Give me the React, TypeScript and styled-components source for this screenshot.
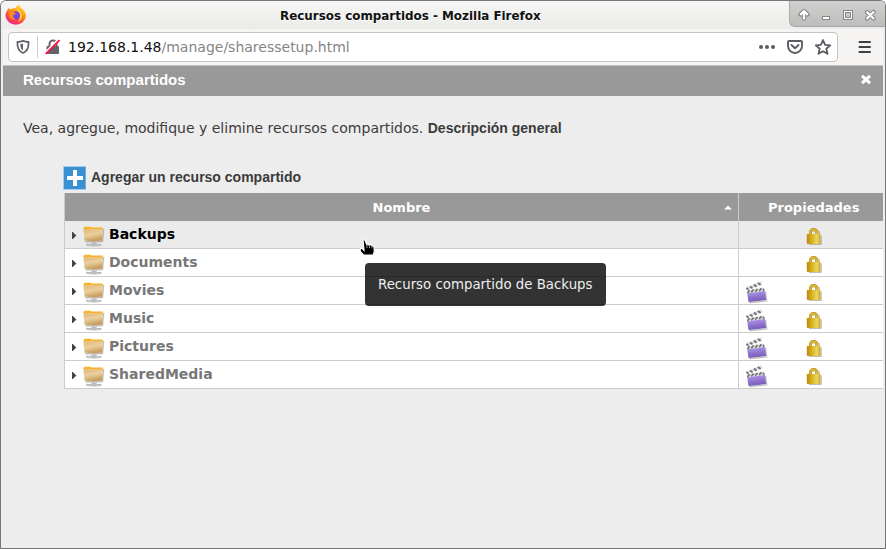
import React from 'react';
import styled, { createGlobalStyle } from 'styled-components';

const Global = createGlobalStyle`
  * { box-sizing: border-box; }
  body { margin: 0; background: #fff; overflow: hidden; }
  svg { display: block; flex: none; }
`;
const sans = '"DejaVu Sans", sans-serif';
const arial = '"Liberation Sans", Arial, sans-serif';

const Window = styled.div`
  width: 886px; height: 549px; position: relative; overflow: hidden;
  display: flex; flex-direction: column; background: #ededed;
  border: 1px solid #777; border-bottom-color: #747474; border-radius: 6px 6px 1px 1px;
  color: #3b3b3b; font: 14px ${sans}; white-space: nowrap;
`;
const TitleBar = styled.header`
  height: 28px; flex: none; display: grid; grid-template-columns: 278px 1fr 96px;
  background: linear-gradient(#f6f6f5, #ebebea);
`;
const Logo = styled.div`padding: 3px 0 0 4px;`;
const Title = styled.div`
  font: bold 11.92px/27px ${sans}; color: #111; padding: 2px 0 0 1px; text-shadow: 0 1px #fff; height: 28px;
`;
const Controls = styled.div`
  height: 26px; background: linear-gradient(#d0d0cf, #bdbdbc);
  border: solid #aaa; border-width: 0 0 1px 1px; border-bottom-left-radius: 6px;
`;
const Toolbar = styled.div`
  height: 36px; flex: none; margin: 0 2px; padding: 3px 12px 0 5px; background: #f6f4f2;
  display: flex; justify-content: space-between;
`;
const Address = styled.div`
  width: 830px; height: 30px; border: 1px solid #c9c3bd; border-radius: 4px; background: #fff;
  display: flex; align-items: center; padding: 0 5px 0 7px;
`;
const Separator = styled.i`width: 1px; height: 22px; background: #ccc; margin: 0 7px 0 7px;`;
const Url = styled.div`
  flex: 1; font: 14px/28px ${sans}; color: #858585; padding-left: 7px;
  b { color: #111; font-weight: normal; }
`;
const Actions = styled.div`display: flex; align-items: center; gap: 10px;`;
const MenuSlot = styled.div`padding-top: 9px;`;
const Page = styled.main`
  margin: 0 2px; flex: 1; background: #ededed; overflow: hidden;
`;
const Heading = styled.div`
  height: 31px; background: #999; border-top: 1px solid #c8c0b8; color: #fff;
  padding: 0 12.5px 0 20px; display: flex; justify-content: space-between;
  font: bold 15px/28px ${arial};
`;
const Close = styled.div`padding-top: 9px;`;
const Intro = styled.p`
  margin: 21px 0 0 20px; height: 22px; font: 14px/22px ${sans};
  b { font: bold 14px/20px ${arial}; }
`;
const Add = styled.div`
  display: flex; margin: 27px 0 0 60px; height: 24px; gap: 5px;
  font: bold 14px/22px ${arial};
`;
const Table = styled.div`margin: 3px 0 0 61px; border-left: 1px solid #ccc;`;
const Row = styled.div<{ $active?: boolean }>`
  display: grid; grid-template-columns: 673px 1fr; height: 28px;
  background: ${p => (p.$active ? '#ebebeb' : '#fff')}; color: ${p => (p.$active ? '#000' : '#777')};
  border-bottom: 1px solid #ccc;
`;
const HeadRow = styled(Row)`
  background: #999; color: #fff; border-bottom-color: #999; font: bold 13px/30px ${sans};
`;
const HeadName = styled.div`
  display: grid; grid-template-columns: 1fr 14px; align-items: start; text-align: center; height: 27px;
  span { padding-left: 14px; }
  svg { margin-top: 12px; }
`;
const HeadProps = styled.div`border-left: 1px solid #ccc; padding-left: 29px; height: 28px;`;
const NameCell = styled.div`
  display: flex; padding-left: 7px; font: bold 14px/26px ${sans};
`;
const Arrow = styled.div`width: 11px; padding-top: 10px;`;
const Folder = styled.div`width: 26px; padding-top: 4px;`;
const PropCell = styled.div`
  border-left: 1px solid #ccc; display: grid; grid-template-columns: 61px 1fr; padding: 3px 0 0 6px;
`;
const Tooltip = styled.div`
  position: absolute; left: 364px; top: 262px; width: 241px; height: 43px; border-radius: 4px;
  background: rgba(0,0,0,.8); color: #eee; font: 13.33px/44px ${sans}; padding-left: 13px;
`;
const Pointer = styled.svg`position: absolute; left: 358px; top: 238px;`;

const Firefox = () => (
  <svg width="22" height="22" viewBox="0 0 22 22">
    <defs>
      <linearGradient id="fx" x1=".8" y1="0" x2=".25" y2="1"><stop stopColor="#ffe54a" /><stop offset=".4" stopColor="#ff980e" /><stop offset=".7" stopColor="#ff3f50" /><stop offset="1" stopColor="#e82a85" /></linearGradient>
    </defs>
    <path fill="url(#fx)" d="M1.5 7.5L3.5 4l1.5 1.5Q7.5 4 10.5 4 11.5 1.5 14 .5q1 3 3.5 5l1 0q2.5 3.5 2.5 6.5A10.3 9.6 0 0 1 .5 12Q.5 9.5 1.5 7.5Z" />
    <path fill="#ffcb36" d="M13.5 1q-1.5 3.5 1.7 6.5 2.8 3 1.3 7-1 2.5-3.5 3.5 3-4.5 1-8.5-4-4.500-.5-8.500Z" />
    <circle cx="10.8" cy="11.5" r="4.2" fill="#7542e5" />
    <path fill="#ff8a16" d="M3.5 8.500q3-2 5-.5l2.500 1.200q-.5 1.800-3 1.800 0 3.500 3 4.500-5 1-7-3Z" />
  </svg>
);
const WindowIcons = () => (
  <svg width="94" height="25" viewBox="0 0 94 25" fill="none">
    <path d="M14 17.5v-6M10.5 13.5L14 10l3.5 3.5M77 11l6.5 6.5m0-6.5L77 17.5" stroke="#858585" strokeWidth="4.4" strokeLinejoin="round" strokeLinecap="round" />
    <path d="M14 18.5v-7M10.2 14L14 10.2l3.8 3.8M76.5 10.5l7.5 7.5m0-7.500L76.5 18" stroke="#fff" strokeWidth="2.3" />
    <rect x="32.5" y="15.5" width="7" height="3" fill="#fff" stroke="#858585" />
    <path d="M53.5 9.500h9v9h-9z" stroke="#858585" /><path d="M54.5 10.500h7v7h-7z" stroke="#fff" /><path d="M55.5 11.500h5v5h-5z" stroke="#858585" />
  </svg>
);
const Shield = () => (
  <svg width="14" height="16" viewBox="0 0 14 16" fill="none" stroke="#62626a" strokeWidth="1.8">
    <path d="M1.5 3Q4.5 2.6 7 1.800q2.500.8 5.500 1.200.6 8.500-5.500 11-6.100-2.500-5.500-11Z" /><path d="M7 4.500v7Q4.200 10 4.300 5.300Z" fill="#62626a" stroke="none" />
  </svg>
);
const Insecure = () => (
  <svg width="16" height="16" viewBox="0 0 16 16" fill="none">
    <path d="M4.500 7V5a3.500 3.500 0 0 1 7 0v2" stroke="#62626a" strokeWidth="2" /><rect x="1.5" y="7" width="12.5" height="8" rx="1" fill="#62626a" />
    <path d="M.5 13.800L13.500.8" stroke="#fff" strokeWidth="2.6" /><path d="M.8 14.800L14.500 1.200" stroke="#ff1147" strokeWidth="1.9" />
  </svg>
);
const Dots = () => <svg width="18" height="16" fill="#5b5b62"><circle cx="3" cy="8" r="2" /><circle cx="9" cy="8" r="2" /><circle cx="15" cy="8" r="2" /></svg>;
const Pocket = () => (
  <svg width="18" height="16" fill="none" stroke="#5b5b62" strokeWidth="1.9" strokeLinecap="round" strokeLinejoin="round">
    <path d="M3 2h12q1 0 1 1v4a7 7 0 0 1-14 0V3q0-1 1-1ZM5.5 6L9 9.3 12.5 6" />
  </svg>
);
const Star = () => (
  <svg width="18" height="18" fill="none" stroke="#5b5b62" strokeWidth="1.8" strokeLinejoin="round"><path d="M9 2l2.1 4.8 5.1.5-3.9 3.4 1.2 5.1L9 13.2l-4.5 2.6 1.2-5.1-3.9-3.4 5.1-.5Z" /></svg>
);
const Hamburger = () => <svg width="13" height="13" stroke="#3e3e43" strokeWidth="2" strokeLinecap="round"><path d="M1.500 1h10.500M1.500 6h10.500M1.500 11h10.500" /></svg>;
const CloseX = () => <svg width="10" height="9" viewBox="0 0 10 9" stroke="#fff" strokeWidth="3.2"><path d="M1 .8l8 7.400M9 .8L1 8.200" /></svg>;
const Plus = () => <svg width="23" height="24"><path fill="#a4cdeb" d="M0 0h23v24H0z" /><path fill="#3991d1" d="M1 1h21.500v22H1z" /><path d="M4 12h16M12 4v16" stroke="#fff" strokeWidth="4" /></svg>;
const FolderIcon = () => (
  <svg width="22" height="22" viewBox="0 0 22 22">
    <defs><linearGradient id="fold" x1="0" y1="0" x2=".3" y2="1"><stop stopColor="#dcb472" /><stop offset=".55" stopColor="#ebd09c" /><stop offset="1" stopColor="#c99f60" /></linearGradient></defs>
    <path d="M2.5 17l17-.5L20.700 4" fill="none" stroke="#999" strokeWidth="1.3" opacity=".65" />
    <path d="M.5 3.200l1-1.400h6l1 .8h11.300v2H.5Z" fill="#f9b021" />
    <path d="M.5 4.300q10 .5 19.500-.9l-.7 12.400q-9 .8-17.800 0Z" fill="url(#fold)" />
    <path d="M11 16.500v3M3 19.800h15.500" stroke="#a2a5a5" strokeWidth="1.2" fill="none" /><path d="M8.500 18h5v3h-5zM4.500 21h13" fill="#b8bcbc" stroke="#c4c7c7" strokeWidth=".7" />
  </svg>
);
const Lock = () => (
  <svg width="17" height="22" viewBox="0 0 17 22">
    <defs><linearGradient id="gold"><stop stopColor="#bc8909" /><stop offset=".5" stopColor="#dfbf32" /><stop offset=".75" stopColor="#ecd75e" /><stop offset="1" stopColor="#c9a22a" /></linearGradient></defs>
    <path d="M3 20.300h12.200V11.500M13.200 10V7" stroke="#777" strokeWidth="1" fill="none" opacity=".6" />
    <path d="M4.500 11V8.600a3.200 3.100 0 0 1 6.400 0V11" fill="none" stroke="#a98315" strokeWidth="3.1" />
    <path d="M4.500 11V8.600a3.200 3.100 0 0 1 6.400 0V11" fill="none" stroke="#d9b938" strokeWidth="2.1" /><rect x=".8" y="10" width="13.7" height="9.9" rx=".8" fill="url(#gold)" />
  </svg>
);
const Clapper = () => (
  <svg width="24" height="24" viewBox="0 0 24 24">
    <defs><linearGradient id="violet" x1="0" y1="0" x2=".2" y2="1"><stop stopColor="#b8a0ee" /><stop offset=".55" stopColor="#9277cf" /><stop offset="1" stopColor="#7758b8" /></linearGradient></defs>
    <path d="M4.5 22.600l17.200-1.800-1.200-9" fill="none" stroke="#888" strokeWidth="1.2" opacity=".6" />
    <path d="M2.200 13.200L20 10.800l1 9.300L3.500 22Z" fill="url(#violet)" />
    <path d="M1 7.600L16.200 1.300l1.300 2.900L2.200 10Z" fill="#ddd" /><path d="M1.800 10.600L18.800 7.400l.7 3L2.200 13Z" fill="#ddd" />
    <path d="M1.400 8l2 1.700M5 6.300l2.500 2M9 4.500l2.500 2.300M13 2.800l2.600 2.200M2.500 13l2-2.700m1.800 2.200L8.500 9.600m1.800 2.200l2.200-2.900m1.700 2.400l2.200-3m1.700 2.400l1-1.700" stroke="#707070" strokeWidth="1.7" />
  </svg>
);
const shares = [
  { name: 'Backups' }, { name: 'Documents' }, { name: 'Movies', media: true },
  { name: 'Music', media: true }, { name: 'Pictures', media: true }, { name: 'SharedMedia', media: true },
];

export default function App() {
  return (
    <>
      <Global />
      <Window>
        <TitleBar><Logo><Firefox /></Logo><Title>Recursos compartidos - Mozilla Firefox</Title><Controls><WindowIcons /></Controls></TitleBar>
        <Toolbar>
          <Address>
            <Shield /><Separator /><Insecure />
            <Url><b>192.168.1.48</b>/manage/sharessetup.html</Url>
            <Actions><Dots /><Pocket /><Star /></Actions>
          </Address>
          <MenuSlot><Hamburger /></MenuSlot>
        </Toolbar>
        <Page>
          <Heading>Recursos compartidos<Close><CloseX /></Close></Heading>
          <Intro>Vea, agregue, modifique y elimine recursos compartidos. <b>Descripción general</b></Intro>
          <Add><Plus />Agregar un recurso compartido</Add>
          <Table>
            <HeadRow>
              <HeadName><span>Nombre</span><svg width="8" height="5"><path d="M0 4.500L4 .5l4 4Z" fill="#fff" /></svg></HeadName>
              <HeadProps>Propiedades</HeadProps>
            </HeadRow>
            {shares.map((s, i) => (
              <Row key={s.name} $active={i === 0}>
                <NameCell>
                  <Arrow><svg width="5" height="9"><path d="M0 1h.8l3.500 3.500L.8 8H0Z" fill="#444" /></svg></Arrow>
                  <Folder><FolderIcon /></Folder>{s.name}
                </NameCell>
                <PropCell><div>{s.media && <Clapper />}</div><Lock /></PropCell>
              </Row>
            ))}
          </Table>
        </Page>
        <Tooltip>Recurso compartido de Backups</Tooltip>
        <Pointer width="18" height="18" viewBox="0 0 18 18">
          <path d="M4 1h2l1.600 4.500 1-.5 1.400 1 1.500-.5 1.200 1 1.500.3 1 1.500V13l-1 3H4.500L1.200 12.500V9.500l2 0 1.800 1.800Z" fill="#000" stroke="#fff" strokeWidth="1.2" />
          <path d="M8 6v3m2.500-2.500v2.500m2.500-2v2.500" stroke="#fff" strokeWidth=".6" />
        </Pointer>
      </Window>
    </>
  );
}
